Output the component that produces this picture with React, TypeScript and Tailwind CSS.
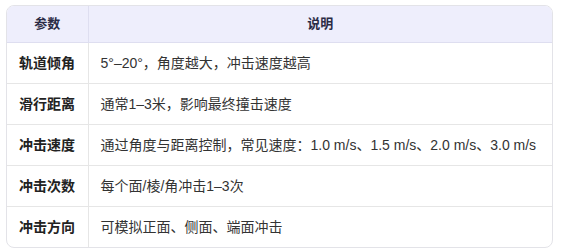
const ROWS = [
  { name: '轨道倾角', desc: '5°–20°，角度越大，冲击速度越高' },
  { name: '滑行距离', desc: '通常1–3米，影响最终撞击速度' },
  { name: '冲击速度', desc: '通过角度与距离控制，常见速度：1.0 m/s、1.5 m/s、2.0 m/s、3.0 m/s' },
  { name: '冲击次数', desc: '每个面/棱/角冲击1–3次' },
  { name: '冲击方向', desc: '可模拟正面、侧面、端面冲击' },
];

export default function App() {
  return (
    <div className="min-h-screen bg-white pl-[6px] pt-[5px] font-['Liberation_Sans','Noto_Sans_CJK_SC',sans-serif]">
      <div className="w-[547px] overflow-hidden rounded-lg border border-[#e3e3e8]">
        <table className="w-full border-collapse text-left">
          <thead>
            <tr className="bg-[#eeeefc] text-[13px] font-semibold text-[#2b2b45]">
              <th className="w-[81px] border-b border-r border-[#dedef0] py-2 text-center leading-5">参数</th>
              <th className="border-b border-[#dedef0] py-2 text-center leading-5">说明</th>
            </tr>
          </thead>
          <tbody className="text-[14px] text-[#333333]">
            {ROWS.map((row, i) => (
              <tr key={row.name} className={i < ROWS.length - 1 ? 'border-b border-[#e6e6e6]' : ''}>
                <td className="border-r border-[#e6e6e6] px-3 py-[10px] font-bold leading-5 text-[#222222]">
                  {row.name}
                </td>
                <td className="whitespace-nowrap px-3 py-[10px] leading-5">{row.desc}</td>
              </tr>
            ))}
          </tbody>
        </table>
      </div>
    </div>
  );
}
